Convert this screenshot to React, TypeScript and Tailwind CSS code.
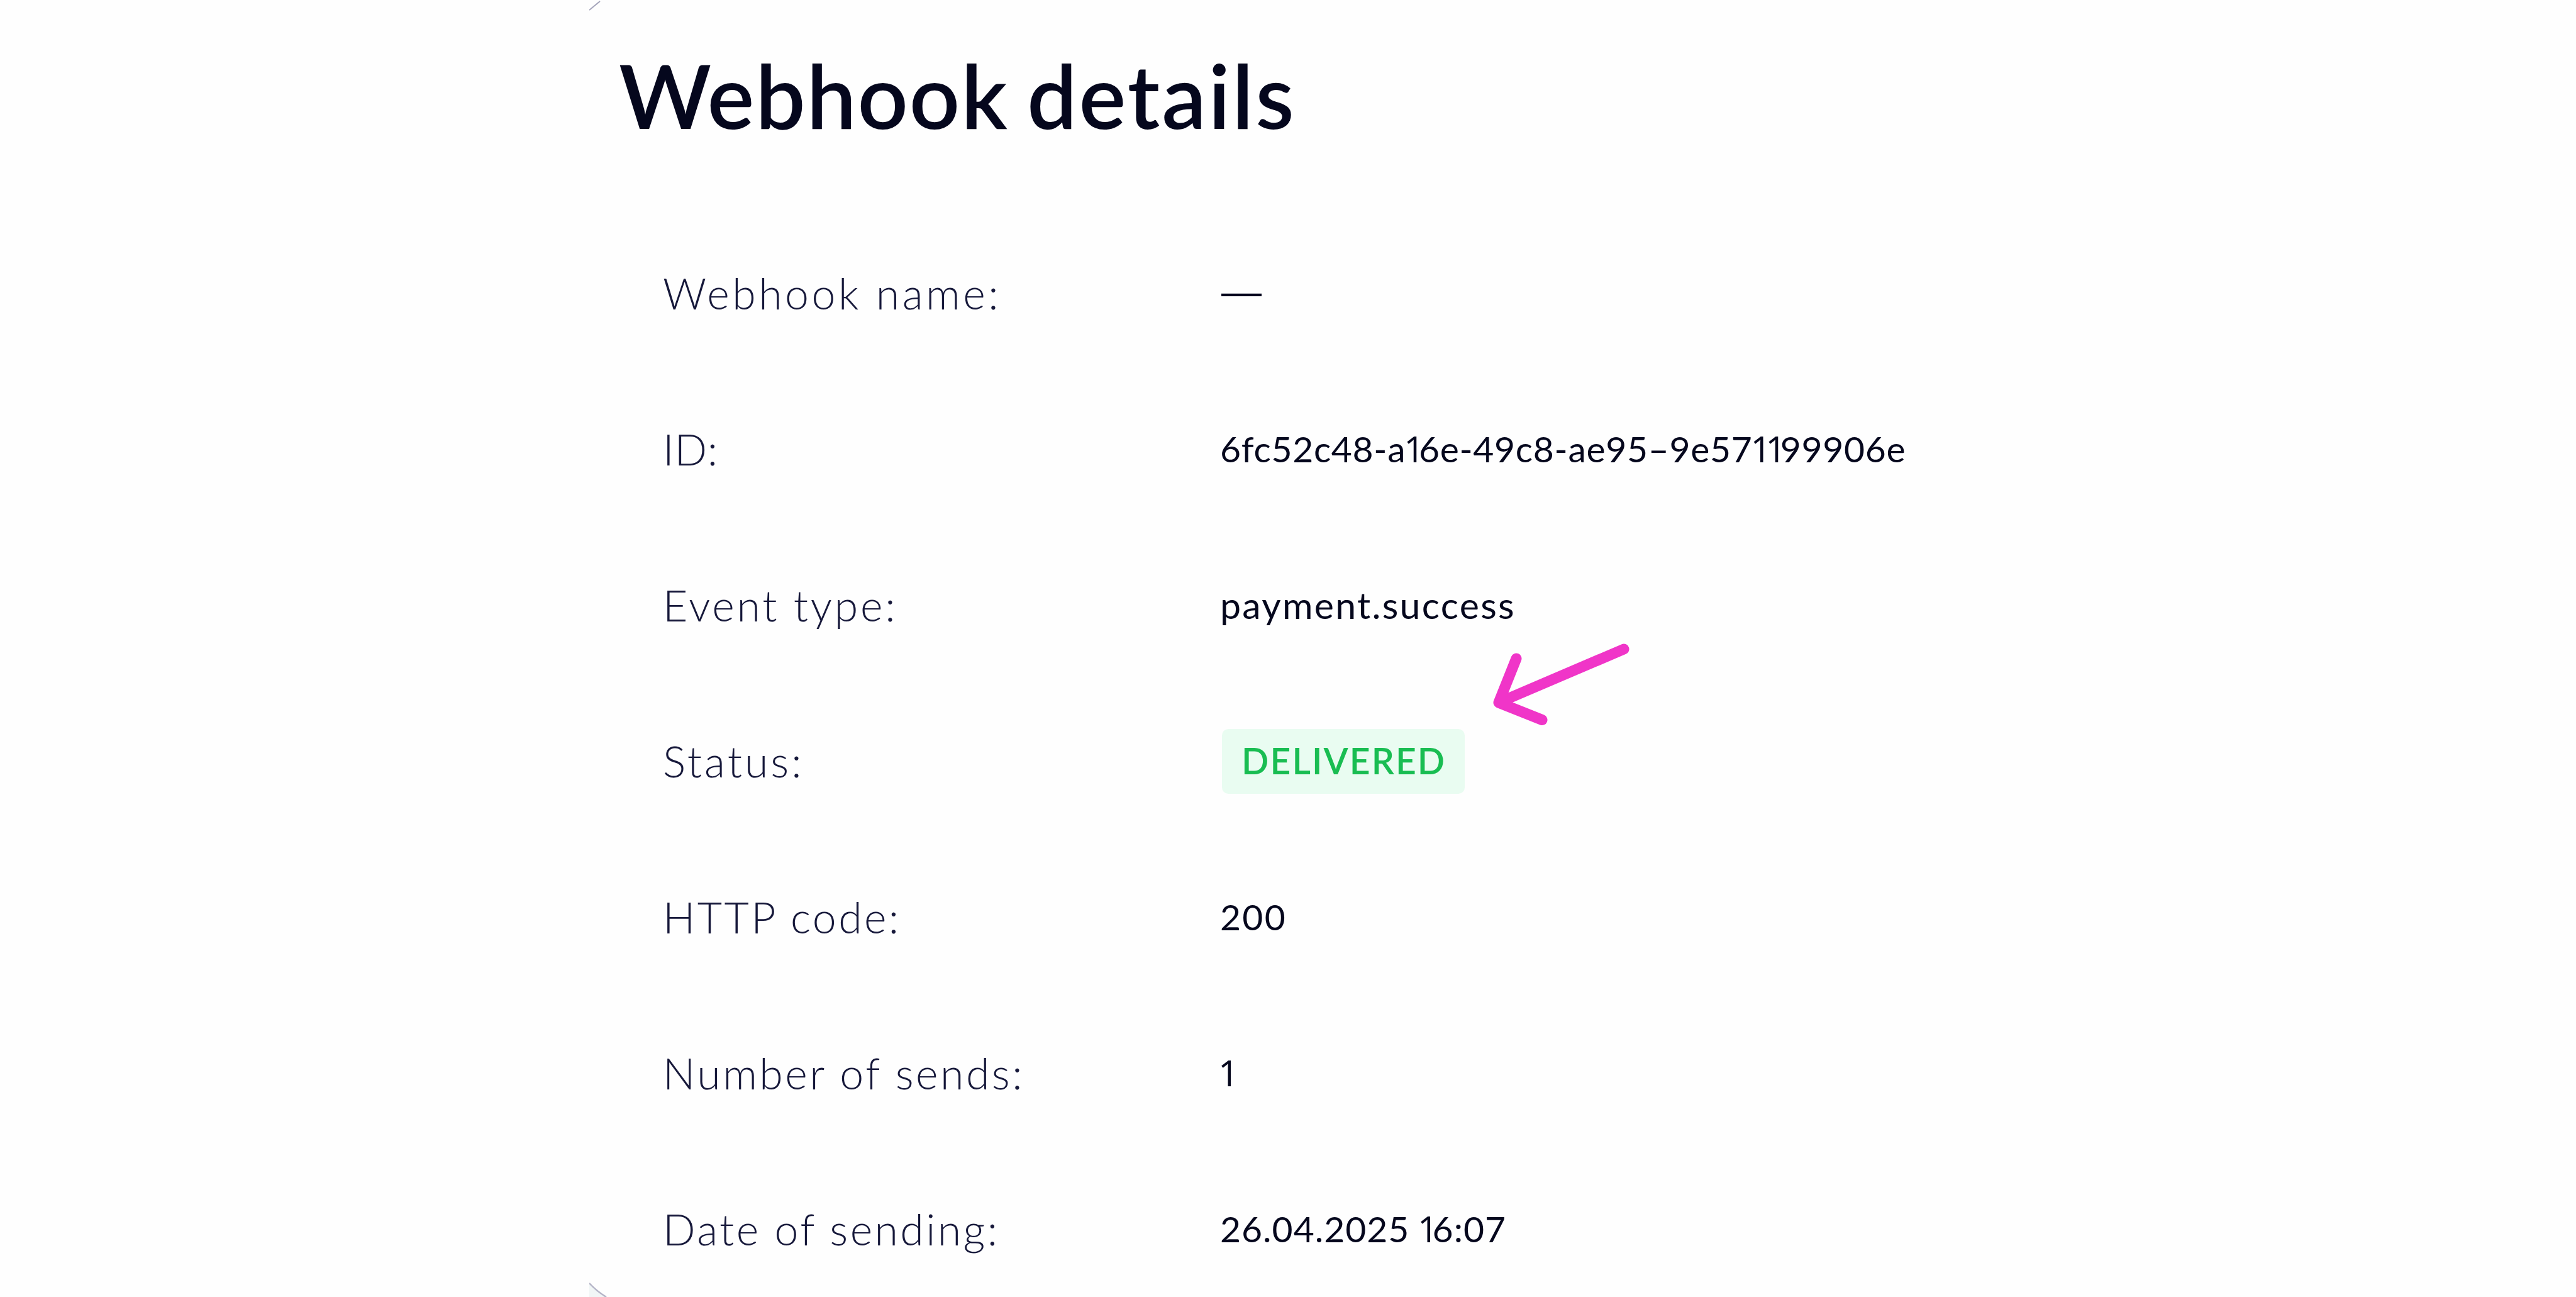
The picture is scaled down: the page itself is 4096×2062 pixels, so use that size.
import { Fragment, ReactNode } from 'react';

type Detail = {
  label: string;
  labelClass: string;
  value: ReactNode;
};

// Lato draws "1" with a foot, so that digit is set in Open Sans
function Value({ text, className }: { text: string, className: string }) {
  return (
    <span className={`whitespace-nowrap ${className}`}>
      {text.split(/(1+)/).map((part, index) => (
        part.startsWith('1')
          // eslint-disable-next-line react/no-array-index-key
          ? <span key={index} className="font-['Open_Sans'] leading-[0] tracking-[-9px] -ml-[3px]">{part}</span>
          // eslint-disable-next-line react/no-array-index-key
          : <Fragment key={index}>{part}</Fragment>
      ))}
    </span>
  );
}

const details: Detail[] = [
  {
    label: 'Webhook name:',
    labelClass: 'tracking-[4.5px]',
    value: <span className="block font-['Liberation_Sans'] text-[64px] ml-[2px] -mt-[6px]">—</span>,
  },
  {
    label: 'ID:',
    labelClass: 'tracking-[0.7px]',
    value: <Value text="6fc52c48-a16e-49c8-ae95–9e571199906e" className="text-[57px] tracking-[0.7px]" />,
  },
  {
    label: 'Event type:',
    labelClass: 'tracking-[3.8px]',
    value: <Value text="payment.success" className="text-[59px] tracking-[2.3px]" />,
  },
  {
    label: 'Status:',
    labelClass: 'tracking-[4px]',
    value: (
      <span className="flex items-center w-[386px] h-[103px] pl-[31px] ml-[3px] rounded-[10px] bg-[#e9fcf1] text-[57px] font-semibold tracking-[2.1px] text-[#19bd52]">
        DELIVERED
      </span>
    ),
  },
  {
    label: 'HTTP code:',
    labelClass: 'tracking-[3.4px]',
    value: <Value text="200" className="text-[57px] tracking-[2.3px]" />,
  },
  {
    label: 'Number of sends:',
    labelClass: 'tracking-[3.5px]',
    value: <Value text="1" className="text-[57px]" />,
  },
  {
    label: 'Date of sending:',
    labelClass: 'tracking-[3.4px]',
    value: <Value text="26.04.2025 16:07" className="text-[57px] tracking-[1px]" />,
  },
];

export default function App() {
  return (
    <main className="relative w-[4096px] h-[2062px] overflow-hidden bg-[#fefefe] font-['Lato',sans-serif] text-[#05071d]">
      <h1 className="h-[342px] pt-[80px] pl-[984px] text-[141px] leading-[141px] font-semibold [word-spacing:-7.4px]">
        <span className="tracking-[1.8px]">Webhook </span>
        <span className="tracking-[3px]">details</span>
      </h1>
      <dl className="pl-[1054px]">
        {details.map(({ label, labelClass, value }) => (
          <div key={label} className="flex items-center h-[248px]">
            <dt className={`w-[886px] text-[68px] font-light whitespace-nowrap text-[#16183a] ${labelClass}`}>
              {label}
            </dt>
            <dd>{value}</dd>
          </div>
        ))}
      </dl>

      {/* rounded corners of the dialog */}
      <svg className="absolute left-[937px] top-0" width="30" height="20" fill="none">
        <path d="M0 16L17 2" stroke="#a5a5bb" strokeWidth="2" />
      </svg>
      <svg className="absolute left-[937px] bottom-0" width="30" height="24" fill="none">
        <path d="M0 2Q12 15 27 24H0Z" fill="#f1f6f6" />
        <path d="M0 2Q12 15 27 24" stroke="#b5b5c8" strokeWidth="2.5" />
      </svg>

      {/* arrow pointing at the status */}
      <svg className="absolute left-[2364px] top-[1012px]" width="240" height="153" fill="none">
        <path
          d="M218 20L19 105M47 35L19 105L88 132.5"
          stroke="#f035c8"
          strokeWidth="17"
          strokeLinecap="round"
          strokeLinejoin="round"
        />
      </svg>
    </main>
  );
}
